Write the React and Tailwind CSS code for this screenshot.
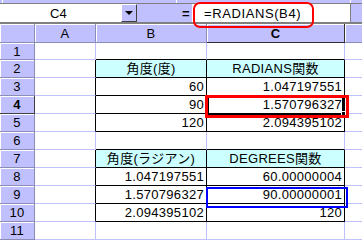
const LAV = 'bg-[#c0c0ff]';

const ROWS = [
  { n: 1, b: '', c: '' },
  { n: 2, b: '角度(度)', c: 'RADIANS関数', head: true },
  { n: 3, b: '60', c: '1.047197551' },
  { n: 4, b: '90', c: '1.570796327' },
  { n: 5, b: '120', c: '2.094395102' },
  { n: 6, b: '', c: '' },
  { n: 7, b: '角度(ラジアン)', c: 'DEGREES関数', head: true },
  { n: 8, b: '1.047197551', c: '60.00000004' },
  { n: 9, b: '1.570796327', c: '90.00000001' },
  { n: 10, b: '2.094395102', c: '120' },
  { n: 11, b: '', c: '' },
];

function inTable(n) {
  return (n >= 2 && n <= 5) || (n >= 7 && n <= 10);
}

function RowHeader({ n }) {
  const active = n === 4;
  return (
    <div
      className={
        active
          ? 'w-[35px] shrink-0 flex items-center justify-center font-bold bg-[#c0c0ff] border-r border-b border-r-[#404040] border-b-[#404040] shadow-[inset_1px_1px_0_#ffffff]'
          : 'w-[35px] shrink-0 flex items-center justify-center bg-[#c0c0ff] border-r border-b border-[#8c8cb8] shadow-[inset_1px_1px_0_#ffffff]'
      }
    >
      {n}
    </div>
  );
}

function DataCell({ width, text, row, head }) {
  const table = inTable(row.n);
  const topEdge = row.n === 1 || row.n === 6;
  const border = table
    ? 'border-r border-b border-black'
    : topEdge
      ? 'border-r border-b border-r-[#c0c0ff] border-b-black'
      : 'border-r border-b border-[#c0c0ff]';
  const fill = head ? 'bg-[#ccffff] justify-center' : 'bg-white justify-end pr-[2px]';
  return (
    <div className={`${width} shrink-0 flex items-center ${border} ${fill}`}>
      {text}
    </div>
  );
}

function SheetRow({ row }) {
  const h = row.n === 1 ? 'h-[17px]' : 'h-[18px]';
  return (
    <div className={`flex ${h}`}>
      <RowHeader n={row.n} />
      <div
        className={
          inTable(row.n)
            ? 'w-[61px] shrink-0 bg-white border-r border-b border-r-black border-b-[#c0c0ff]'
            : 'w-[61px] shrink-0 bg-white border-r border-b border-[#c0c0ff]'
        }
      />
      <DataCell width="w-[111px]" text={row.b} row={row} head={row.head} />
      <DataCell width="w-[138px]" text={row.c} row={row} head={row.head} />
      <div className="flex-1 bg-white border-b border-[#c0c0ff]" />
    </div>
  );
}

export default function App() {
  return (
    <div
      className="relative w-[362px] h-[240px] overflow-hidden bg-white text-black text-[13px] leading-none tracking-[0.3px]"
      style={{ fontFamily: '"Liberation Sans", "Noto Sans CJK JP", sans-serif' }}
    >
      {/* toolbar remnant */}
      <div className={`h-[4px] ${LAV} border-b border-[#808080] flex`}>
        <div className="w-[2px]" />
        <div className="w-px bg-white" />
        <div className="w-[173px]" />
        <div className="w-px bg-white" />
        <div className="w-[173px]" />
        <div className="w-px bg-white" />
      </div>

      {/* name box + formula bar */}
      <div className={`flex h-[18px] ${LAV}`}>
        <div className="w-[121px] bg-white flex items-center justify-center pr-[4px]">C4</div>
        <div className="w-[16px] bg-[#c0c0ff] border border-t-white border-l-white border-r-[#404040] border-b-[#404040] flex items-center justify-center">
          <div className="w-0 h-0 border-l-[4px] border-r-[4px] border-t-[4px] border-l-transparent border-r-transparent border-t-black" />
        </div>
        <div className="w-[55px] flex items-center justify-end pr-[2px] font-bold">=</div>
        <div className="w-[158px] bg-white flex items-center pl-[12px] tracking-[0.6px]">=RADIANS(B4)</div>
        <div className="w-px bg-[#808080]" />
        <div className="flex-1" />
      </div>
      <div className="h-[2px] bg-[#808080]" />

      {/* column headers */}
      <div className="flex h-[19px]">
        <div className="w-[35px] shrink-0 bg-[#c0c0ff] border-r border-b border-[#8c8cb8] shadow-[inset_1px_1px_0_#ffffff]" />
        <div className="w-[61px] shrink-0 flex items-center justify-center bg-[#c0c0ff] border-r border-b border-[#8c8cb8] shadow-[inset_1px_1px_0_#ffffff]">A</div>
        <div className="w-[111px] shrink-0 flex items-center justify-center bg-[#c0c0ff] border-r border-b border-[#8c8cb8] shadow-[inset_1px_1px_0_#ffffff]">B</div>
        <div className="w-[138px] shrink-0 flex items-center justify-center font-bold bg-[#c0c0ff] border-r border-b border-[#303030] shadow-[inset_1px_1px_0_#ffffff]">C</div>
        <div className="flex-1 bg-[#c0c0ff] border-b border-[#8c8cb8] shadow-[inset_1px_1px_0_#ffffff]" />
      </div>

      {ROWS.map((row) => (
        <SheetRow key={row.n} row={row} />
      ))}

      {/* active cell C4 */}
      <div className="absolute left-[207px] top-[96px] w-[137px] h-[19px] border-2 border-black" />
      <div className="absolute left-[341px] top-[111px] w-[5px] h-[5px] bg-black border border-white" />

      {/* annotations */}
      <div className="absolute left-[193px] top-[2px] w-[121px] h-[26px] border-2 border-[#ff0000] rounded-[7px]" />
      <div className="absolute left-[205px] top-[95px] w-[144px] h-[23px] border-[3px] border-[#ff0000]" />
      <div className="absolute left-[206px] top-[187px] w-[142px] h-[21px] border-2 border-[#0000ff]" />
    </div>
  );
}
